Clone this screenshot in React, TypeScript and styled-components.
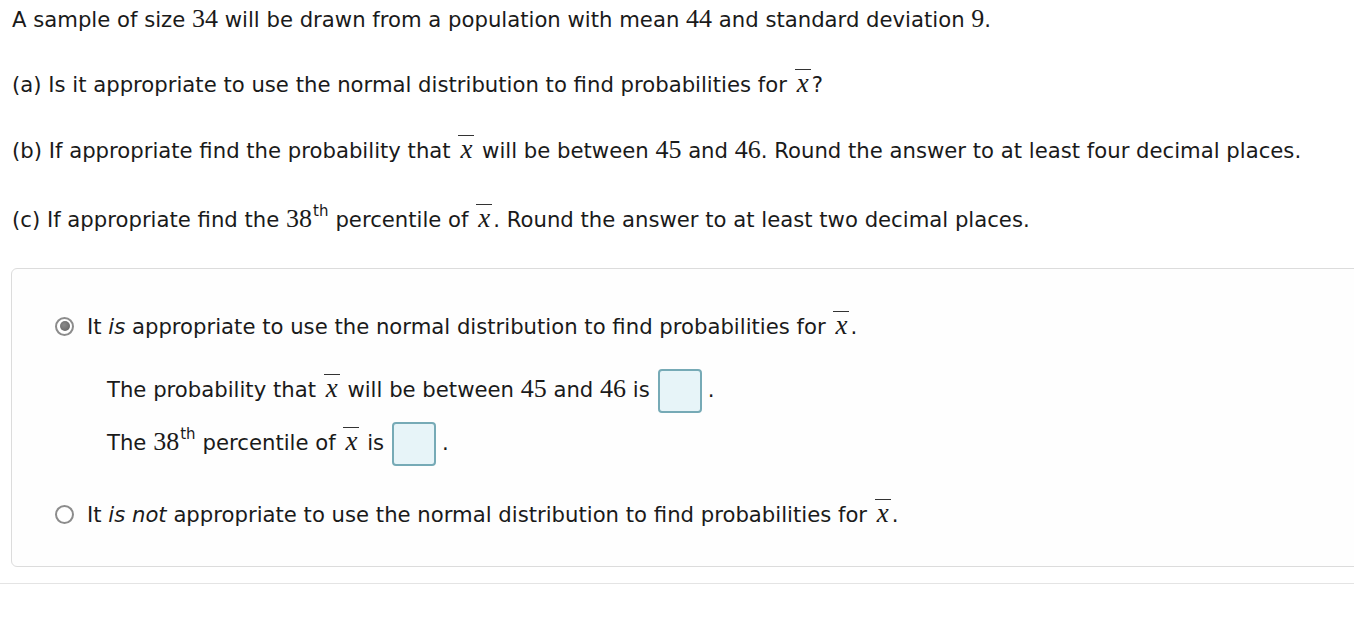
import React from "react";
import styled, { createGlobalStyle } from "styled-components";

const GlobalStyle = createGlobalStyle`
  html, body {
    margin: 0;
    padding: 0;
    background: #ffffff;
    overflow: hidden;
  }
  body {
    font-family: "DejaVu Sans", Verdana, sans-serif;
    font-size: 21.2px;
    color: #1a1a1a;
  }
`;

const Page = styled.div`
  width: 1354px;
  overflow: hidden;
  padding-top: 5px;
`;

const Question = styled.p<{ $h: number }>`
  margin: 0 0 0 12px;
  height: ${(p) => p.$h}px;
  line-height: 30px;
  white-space: nowrap;
`;

const Num = styled.span`
  font-family: "Liberation Serif", "Times New Roman", "DejaVu Serif", serif;
  font-size: 26px;
  line-height: 20px;
`;

const Sup = styled.sup`
  font-family: "DejaVu Sans", Verdana, sans-serif;
  font-size: 15px;
  vertical-align: 11px;
  line-height: 0;
  margin-left: 1px;
  margin-right: 7px;
`;

const XBar = styled.span`
  display: inline-block;
  position: relative;
  font-family: "Liberation Serif", "Times New Roman", "DejaVu Serif", serif;
  font-style: italic;
  font-size: 27px;
  line-height: 20px;
  padding: 0 3px;
  &::before {
    content: "";
    position: absolute;
    left: 1px;
    right: 1px;
    top: -4px;
    border-top: 1.5px solid #333;
  }
`;

const AnswerBox = styled.div`
  margin-left: 11px;
  margin-top: 33px;
  width: 1360px;
  height: 297px;
  border: 1px solid #dcdcdc;
  border-radius: 6px;
  background: #fefefe;
  display: flex;
  flex-direction: column;
`;

const Spacer = styled.div<{ $h: number }>`
  height: ${(p) => p.$h}px;
  flex-shrink: 0;
`;

const OptionRow = styled.label`
  display: flex;
  align-items: center;
  gap: 13px;
  margin-left: 43px;
  height: 30px;
  white-space: nowrap;
`;

const Radio = styled.span<{ $checked?: boolean }>`
  flex-shrink: 0;
  width: 15px;
  height: 15px;
  border-radius: 50%;
  border: 2px solid #8c8c8c;
  background: #fff;
  display: flex;
  align-items: center;
  justify-content: center;
  &::after {
    content: "";
    width: 10px;
    height: 10px;
    border-radius: 50%;
    background: ${(p) =>
      p.$checked ? "radial-gradient(circle at 40% 40%, #8a8a8a, #5e5e5e)" : "transparent"};
  }
`;

const SubBlock = styled.div`
  margin-left: 95px;
  margin-top: 27px;
  display: flex;
  flex-direction: column;
  gap: 9px;
`;

const SubRow = styled.div`
  height: 44px;
  line-height: 44px;
  white-space: nowrap;
`;

const InputSquare = styled.span`
  display: inline-block;
  vertical-align: middle;
  box-sizing: border-box;
  width: 44px;
  height: 44px;
  border: 2px solid #76aab6;
  border-radius: 4px;
  background: #e7f4f8;
  margin-left: 8px;
  margin-right: 6px;
`;

const Rule = styled.div`
  margin-top: 16px;
  height: 1px;
  background: #e4e4e4;
`;

export default function App() {
  return (
    <Page>
      <GlobalStyle />
      <Question $h={65}>
        A sample of size <Num>34</Num> will be drawn from a population with mean <Num>44</Num> and
        standard deviation <Num>9</Num>.
      </Question>
      <Question $h={66}>
        (a) Is it appropriate to use the normal distribution to find probabilities for <XBar>x</XBar>?
      </Question>
      <Question $h={69}>
        (b) If appropriate find the probability that <XBar>x</XBar> will be between <Num>45</Num> and{" "}
        <Num>46</Num>. Round the answer to at least four decimal places.
      </Question>
      <Question $h={30}>
        (c) If appropriate find the <Num>38</Num>
        <Sup>th</Sup>percentile of <XBar>x</XBar>. Round the answer to at least two decimal places.
      </Question>

      <AnswerBox>
        <Spacer $h={42} />
        <OptionRow>
          <Radio $checked />
          <span>
            It <i>is</i> appropriate to use the normal distribution to find probabilities for{" "}
            <XBar>x</XBar>.
          </span>
        </OptionRow>
        <SubBlock>
          <SubRow>
            The probability that <XBar>x</XBar> will be between <Num>45</Num> and <Num>46</Num> is
            <InputSquare />.
          </SubRow>
          <SubRow>
            The <Num>38</Num>
            <Sup>th</Sup>percentile of <XBar>x</XBar> is
            <InputSquare />.
          </SubRow>
        </SubBlock>
        <Spacer $h={34} />
        <OptionRow>
          <Radio />
          <span>
            It <i>is not</i> appropriate to use the normal distribution to find probabilities for{" "}
            <XBar>x</XBar>.
          </span>
        </OptionRow>
      </AnswerBox>
      <Rule />
    </Page>
  );
}
